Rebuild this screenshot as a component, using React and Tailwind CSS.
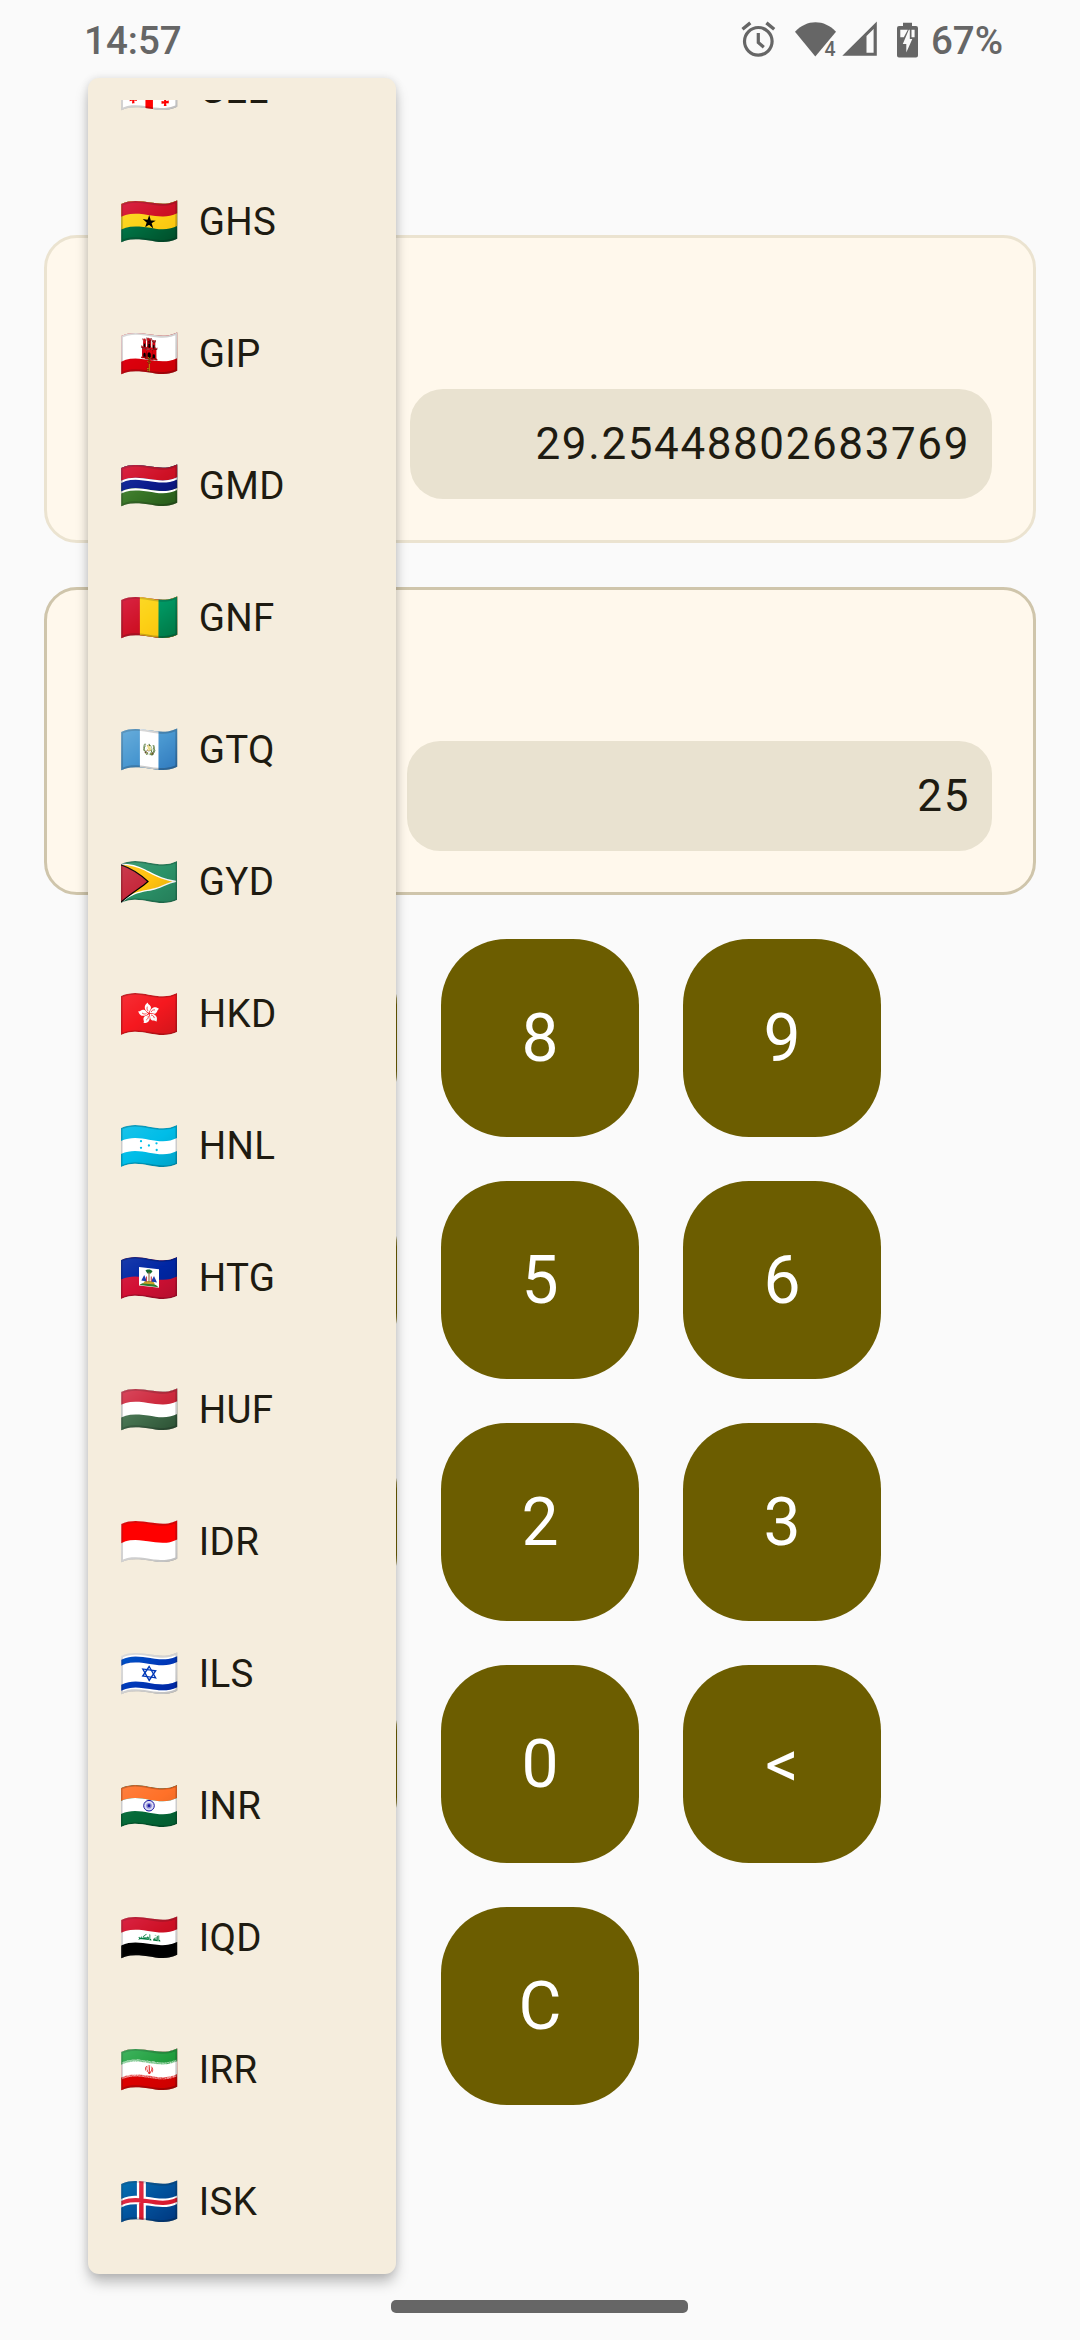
import { useId } from 'react';

const WAVE = 'M0 3C5 .8 9.5 0 14 0C24 0 32 3.3 42 3.3C47 3.3 52 2 56 0V39C52 41 47 42 42 42C32 42 24 38.7 14 38.7C9.5 38.7 5 39.7 0 42Z';
const BAND = 'M0 3C5 .8 9.5 0 14 0C24 0 32 3.3 42 3.3C47 3.3 52 2 56 0V13C52 15 47 16.3 42 16.3C32 16.3 24 13 14 13C9.5 13 5 13.8 0 16Z';

function WavedFlag({ children, emblem }) {
  const id = useId();
  return (
    <svg className="ml-[2px] h-[42px] w-[56px]" viewBox="0 0 56 42">
      <defs>
        <clipPath id={`${id}c`}><path d={WAVE} /></clipPath>
        <linearGradient id={`${id}g`} x1="0" y1="0" x2="1" y2="1">
          <stop offset="0" stopColor="#fff" stopOpacity=".1" />
          <stop offset=".5" stopColor="#fff" stopOpacity="0" />
          <stop offset=".5" stopColor="#000" stopOpacity="0" />
          <stop offset="1" stopColor="#000" stopOpacity=".15" />
        </linearGradient>
      </defs>
      <g clipPath={`url(#${id}c)`}>
        {children}
        <path d={WAVE} fill={`url(#${id}g)`} />
        {emblem}
        <path d={WAVE} fill="none" stroke="#000" strokeOpacity=".2" strokeWidth="3" />
      </g>
    </svg>
  );
}

function Guyana() {
  return (
    <WavedFlag>
      <path d={WAVE} fill="#2b9268" />
      <path d="M0 3C10 3.500 17 5.500 24 9C34 14 42 19 55 20.300C45 22 40 27 31 28.500C22 30.500 10 31 0 42Z" fill="#ffc20e" stroke="#fff" strokeWidth="1.300" />
      <path d="M-1 3.500C10 7 19 13 27 20.500C20 27 11 31 -1 42Z" fill="#c5283b" stroke="#000" strokeWidth="1.200" />
    </WavedFlag>
  );
}

function HongKong() {
  return (
    <WavedFlag>
      <path d={WAVE} fill="#f5181f" />
      <g transform="translate(28 20.500)">
        {[-10, 62, 134, 206, 278].map((a) => (
          <g key={a} transform={`rotate(${a})`}>
            <path d="M0 -.8C-4.200 -3.500 -4.500 -9 .8 -11C.2 -9 3 -8.500 3 -5.800C3 -3.500 .6 -3 0 -.8Z" fill="#fff" />
            <path d="M-.3 -2.500C-1.600 -4 -1.300 -5.500 -.4 -7" fill="none" stroke="#f01820" strokeWidth=".7" />
          </g>
        ))}
      </g>
    </WavedFlag>
  );
}

function Honduras() {
  const emblem = (
    <>
      <path d={BAND} fill="#fff" transform="translate(0 13)" />
      <g fill="#00bfe8">
        {[[20, 16.2], [20, 22.8], [27.9, 20.5], [35.5, 18.3], [35.7, 25]].map(([x, y]) => (
          <circle key={`${x}-${y}`} cx={x} cy={y} r="1.150" />
        ))}
      </g>
    </>
  );
  return (
    <WavedFlag emblem={emblem}>
      <path d={WAVE} fill="#00bde8" />
    </WavedFlag>
  );
}

function Haiti() {
  const emblem = (
    <>
      <path d="M18 10L38 12.200V30.800L18 28.500Z" fill="#fff" />
      <path d="M18.500 28C22 24.500 33 25 37.500 30.200Z" fill="#2e7d32" />
      <path d="M22 26.500L24 24H32L34 27.500Z" fill="#c9a227" />
      <path d="M24.500 13.500C26 12 30 12 31.500 14.200L29.800 16.500H26.500Z" fill="#146b2c" />
      <path d="M28 15V25" stroke="#8a6d3b" strokeWidth="1.100" />
      <path d="M20.300 23.500L23.200 18L26 24.500ZM30 24.500L33 19L36 25.500Z" fill="#1f3fae" />
      <path d="M25.500 19.500V24.500M30.300 19.500V24.500" stroke="#c63b4e" strokeWidth="1.100" />
    </>
  );
  return (
    <WavedFlag emblem={emblem}>
      <path d={WAVE} fill="#d21034" />
      <path d={BAND} fill="#0026a3" />
      <path d={BAND} fill="#0026a3" transform="translate(0 6.500)" />
    </WavedFlag>
  );
}

function India() {
  const emblem = (
    <>
      <path d={BAND} fill="#fff" transform="translate(0 13)" />
      <circle cx="28" cy="20.700" r="5.300" fill="#dcdcf3" stroke="#1a16a0" strokeWidth="1" />
      <circle cx="28" cy="20.700" r="2.800" fill="#8886cf" />
      <circle cx="28" cy="20.700" r="1.400" fill="#1a16a0" />
    </>
  );
  return (
    <WavedFlag emblem={emblem}>
      <path d={WAVE} fill="#046a38" />
      <path d={BAND} fill="#ff7128" />
    </WavedFlag>
  );
}

const CURRENCIES = [
  { code: 'GEL', flag: '🇬🇪' },
  { code: 'GHS', flag: '🇬🇭' },
  { code: 'GIP', flag: '🇬🇮' },
  { code: 'GMD', flag: '🇬🇲' },
  { code: 'GNF', flag: '🇬🇳' },
  { code: 'GTQ', flag: '🇬🇹' },
  { code: 'GYD', flag: <Guyana /> },
  { code: 'HKD', flag: <HongKong /> },
  { code: 'HNL', flag: <Honduras /> },
  { code: 'HTG', flag: <Haiti /> },
  { code: 'HUF', flag: '🇭🇺' },
  { code: 'IDR', flag: '🇮🇩' },
  { code: 'ILS', flag: '🇮🇱' },
  { code: 'INR', flag: <India /> },
  { code: 'IQD', flag: '🇮🇶' },
  { code: 'IRR', flag: '🇮🇷' },
  { code: 'ISK', flag: '🇮🇸' },
];

function CurrencyMenu() {
  return (
    <div className="absolute left-[88px] top-[78px] h-[2196px] w-[308px] rounded-[11px] bg-[#f5eddd] py-[22px] shadow-[0_9px_14px_-1px_rgba(0,0,0,0.26),0_0_9px_rgba(0,0,0,0.1)]">
      <ul className="h-full overflow-hidden">
        {CURRENCIES.map(({ code, flag }) => (
          <li key={code} className="flex h-[132px] items-center pl-[31px] text-[38.5px] tracking-[0.3px] text-[#1e1b11] first:-mt-[76px]">
            <span className="w-[79.8px] text-[48.5px] tracking-normal">{flag}</span>
            {code}
          </li>
        ))}
      </ul>
    </div>
  );
}

function StatusIcons() {
  return (
    <svg className="mr-[12px] h-[40px] w-[180px]" viewBox="740 20 180 40" fill="#666">
      <g fill="none" stroke="#666" strokeWidth="3.200">
        <circle cx="759.300" cy="40.300" r="13.800" />
        <path d="M759.300 32V41.500L764.800 46.200" />
        <path d="M743.500 28.200L751.300 21.900M775.200 28.200L767.400 21.900" strokeWidth="3.400" />
      </g>
      <path d="M816.300 55.500L796 30.700C802 24.500 809 21.300 816.500 21.300C824 21.300 831 24.500 837 30.700Z" />
      <text x="825.500" y="55" fontSize="19.500" fontWeight="500" stroke="#fafafa" strokeWidth="2.500" paintOrder="stroke">4</text>
      <path d="M843.300 54.800L877.800 20.600V54.800ZM867.500 35V51.800H874.600V28Z" fillRule="evenodd" />
      <path d="M904 21.700H913V25H917Q919 25 919 27V54.500Q919 56.500 917 56.500H900Q898 56.500 898 54.500V27Q898 25 900 25H904Z" />
      <path d="M901.300 28.700H908.800L904.800 36.300H901.300ZM912.500 28.700H915.600V36.300H912.500ZM909.800 28.700H910.800V38H913.300L907.300 51.500V43H903.800Z" fill="#fafafa" />
    </svg>
  );
}

function StatusBar() {
  return (
    <header className="flex h-[78px] items-center justify-between pl-[84px] pr-[77px] pt-[3px] text-[38.5px] font-medium text-[#666]">
      <span>14:57</span>
      <div className="flex items-center">
        <StatusIcons />
        <span>67%</span>
      </div>
    </header>
  );
}

function AmountCard({ value, className, fieldClassName }) {
  return (
    <section className={`flex h-[308px] items-end justify-end rounded-[33px] border-3 bg-[#fff8ec] pb-[41px] pr-[41px] ${className}`}>
      <div className={`flex h-[110px] items-center justify-end rounded-[33px] bg-[#e9e2d0] pr-[22px] text-[44px] tracking-[1.6px] text-[#1e1b11] ${fieldClassName}`}>
        {value}
      </div>
    </section>
  );
}

const KEYS = ['', '8', '9', '', '5', '6', '', '2', '3', '', '0', '<', null, 'C'];

function Keypad() {
  return (
    <div className="ml-[155px] grid grid-cols-[repeat(3,198px)] gap-[44px]">
      {KEYS.map((label, i) =>
        label === null ? (
          <span key={i} />
        ) : (
          <button key={i} className="flex h-[198px] items-center justify-center rounded-[66px] bg-[#6c5d00] text-[66px] text-white">
            {label}
          </button>
        )
      )}
    </div>
  );
}

export default function App() {
  return (
    <div className="relative h-[2340px] w-[1080px] overflow-hidden bg-[#fafafa] font-['Roboto',sans-serif]">
      <StatusBar />
      <main className="flex flex-col gap-[44px] px-[44px] pt-[157px]">
        <AmountCard value="29.25448802683769" className="border-[#ebe3d0]" fieldClassName="w-[582px]" />
        <AmountCard value="25" className="border-[#cfc5ab]" fieldClassName="w-[585px]" />
        <Keypad />
      </main>
      <CurrencyMenu />
      <div className="absolute bottom-[27px] left-[391px] h-[13px] w-[297px] rounded-[5px] bg-[#666]" />
    </div>
  );
}
